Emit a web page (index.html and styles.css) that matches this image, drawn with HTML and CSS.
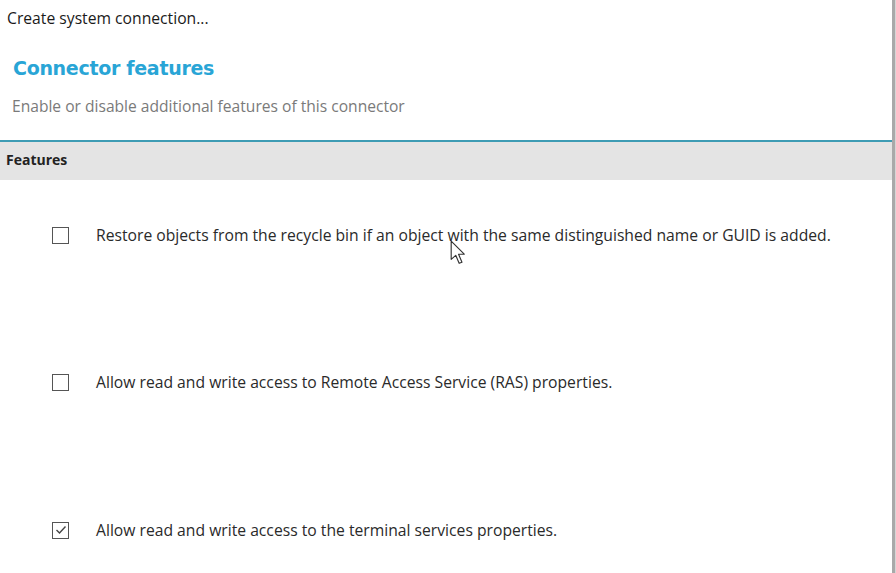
FILE: index.html
```html
<!DOCTYPE html>
<html>
<head>
<meta charset="utf-8">
<link rel="stylesheet" href="styles.css">
</head>
<body>
<div class="window">
  <div class="main">
    <div class="top">
      <div class="title">Create system connection...</div>
      <h1 class="heading">Connector features</h1>
      <div class="subtitle">Enable or disable additional features of this connector</div>
    </div>
    <div class="section-head">Features</div>
    <div class="list">
      <div class="row r1">
        <span class="box"></span>
        <span class="label">Restore objects from the recycle bin if an object with the same distinguished name or GUID is added.</span>
        <svg class="cursor" width="16" height="25" viewBox="0 0 14 22"><path d="M1 1 L1 17 L5 13.5 L8 20.5 L10.5 19.5 L7.5 12.5 L12.5 12.5 Z" fill="#fff" stroke="#333" stroke-width="1" stroke-linejoin="round"/></svg>
      </div>
      <div class="row r2">
        <span class="box"></span>
        <span class="label">Allow read and write access to Remote Access Service (RAS) properties.</span>
      </div>
      <div class="row r3">
        <span class="box checked"><svg width="14" height="14" viewBox="0 0 14 14"><path d="M2.5 7 L5.5 10 L11.5 3.5" fill="none" stroke="#444" stroke-width="1.4"/></svg></span>
        <span class="label">Allow read and write access to the terminal services properties.</span>
      </div>
    </div>
  </div>
  <div class="scrollbar"></div>
</div>
</body>
</html>
```
FILE: styles.css
```css
html, body {
  margin: 0;
  padding: 0;
  background: #fff;
}
body {
  width: 896px;
  height: 573px;
  overflow: hidden;
  font-family: "Open Sans", "Noto Sans", sans-serif;
  color: #222;
}
.window {
  display: flex;
  height: 573px;
}
.main {
  width: 892px;
  display: flex;
  flex-direction: column;
}
.scrollbar {
  width: 3px;
  background: #a9a9a9;
  border-right: 1px solid #d6d6d6;
}
.top {
  padding: 8px 0 0 7px;
  height: 142px;
  box-sizing: border-box;
  border-bottom: 2px solid #3e9cb4;
}
.title {
  font-size: 15.7px;
  line-height: 20px;
  color: #1a1a1a;
}
.heading {
  margin: 28px 0 0 6px;
  font-family: "DejaVu Sans", sans-serif;
  font-size: 19px;
  font-weight: bold;
  line-height: 24px;
  color: #29a5d6;
  letter-spacing: -0.3px;
}
.subtitle {
  margin: 16px 0 0 5px;
  font-size: 15.6px;
  line-height: 20px;
  color: #7a7a7a;
}
.section-head {
  background: #e4e4e4;
  height: 38px;
  padding-left: 6px;
  font-size: 14px;
  font-weight: bold;
  line-height: 36px;
  color: #222;
}
.list {
  display: flex;
  flex-direction: column;
}
.row {
  position: relative;
  display: flex;
  align-items: center;
  padding-left: 52px;
  height: 22px;
}
.r1 { margin-top: 44px; }
.r2 { margin-top: 125px; }
.r3 { margin-top: 126px; }
.box {
  width: 17px;
  height: 17px;
  box-sizing: border-box;
  border: 1.5px solid #555;
  background: #fff;
  display: flex;
  align-items: center;
  justify-content: center;
}
.label {
  margin-left: 27px;
  font-size: 15.7px;
  color: #2a2a2a;
}
.cursor {
  position: absolute;
  left: 450px;
  top: 16px;
}
```
